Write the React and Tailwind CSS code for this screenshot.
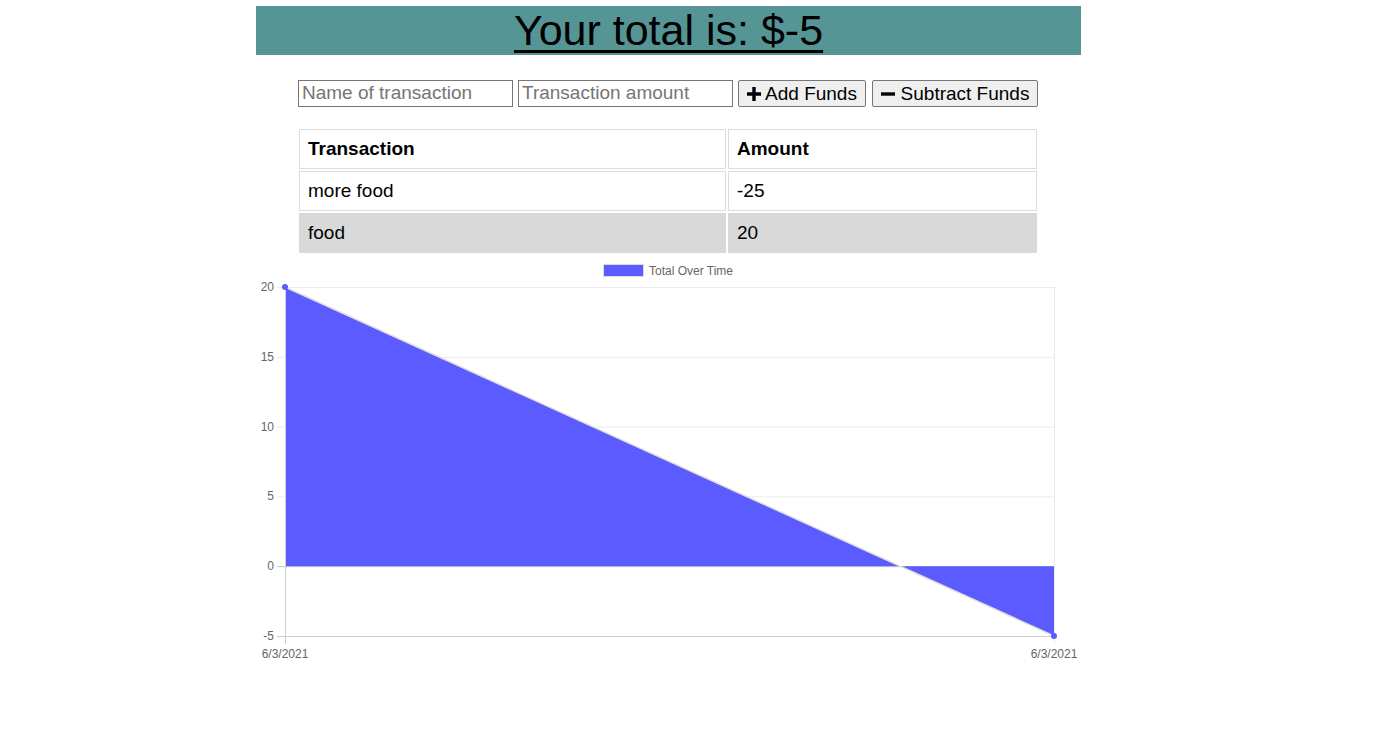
import React from 'react';

const PlusIcon = () => (
    <svg width="14" height="14" viewBox="0 0 14 14" className="inline-block">
        <path d="M5.3 0h3.4v5.3H14v3.4H8.7V14H5.3V8.7H0V5.3h5.3z" fill="#000" />
    </svg>
);

const MinusIcon = () => (
    <svg width="14" height="14" viewBox="0 0 14 14" className="inline-block">
        <rect x="0" y="5.3" width="14" height="3.4" fill="#000" />
    </svg>
);

const Chart = () => {
    const left = 29;
    const right = 798;
    const top = 29;
    const bottom = 378;
    const step = (bottom - top) / 5;
    const ticks = [20, 15, 10, 5, 0, -5];
    const zeroY = top + step * 4;
    const crossX = left + (right - left) * 0.8;

    return (
        <svg width="825" height="415" className="block" style={{ fontFamily: 'Liberation Sans, Arial, sans-serif' }}>
            {/* legend */}
            <rect x="347.5" y="6.5" width="40" height="12" fill="#5b5bff" stroke="#dcdcdc" />
            <text x="393" y="17" fontSize="12" fill="#666">Total Over Time</text>

            {/* grid */}
            {ticks.map((t, i) => {
                const y = top + step * i;
                const isZero = t === 0;
                const isBottom = i === ticks.length - 1;
                return (
                    <g key={t}>
                        <line x1={left - 8} x2={right} y1={y + 0.5} y2={y + 0.5}
                            stroke={isBottom ? '#cfcfcf' : isZero ? '#c8c8c8' : '#ececec'} strokeWidth="1" />
                        <text x="18" y={y + 4} fontSize="12" fill="#666" textAnchor="end">{t}</text>
                    </g>
                );
            })}
            <line x1={right + 0.5} x2={right + 0.5} y1={top} y2={bottom + 8} stroke="#ececec" />

            {/* fill */}
            <polygon points={`${left},${zeroY} ${left},${top} ${crossX},${zeroY}`} fill="#5b5bff" />
            <polygon points={`${crossX},${zeroY} ${right},${bottom} ${right},${zeroY}`} fill="#5b5bff" />
            <line x1={left} y1={top} x2={right} y2={bottom} stroke="#e2e2e2" strokeWidth="1.5" />

            {/* axes */}
            <line x1={left + 0.5} x2={left + 0.5} y1={top} y2={bottom + 8} stroke="#cfcfcf" />

            <circle cx={left} cy={top} r="3" fill="#5b5bff" />
            <circle cx={right} cy={bottom} r="3" fill="#5b5bff" />

            <text x={left} y="400" fontSize="12" fill="#666" textAnchor="middle">6/3/2021</text>
            <text x={right} y="400" fontSize="12" fill="#666" textAnchor="middle">6/3/2021</text>
        </svg>
    );
};

const App = () => {
    const rows = [
        { name: 'more food', value: '-25' },
        { name: 'food', value: '20' },
    ];

    return (
        <div className="min-h-screen bg-white text-black" style={{ fontFamily: '"Liberation Sans", Arial, sans-serif' }}>
            <div className="ml-[256px] w-[825px] pt-[6px]">
                {/* Header */}
                <div className="bg-[#559596] h-[49px] flex justify-center items-start">
                    <h1 className="text-[43px] leading-[49px] underline decoration-[3px] underline-offset-[5px]">
                        Your total is: $-5
                    </h1>
                </div>

                {/* Form */}
                <div className="mt-[25px] ml-[42px] flex items-center gap-[5px] text-[19px]">
                    <input
                        type="text"
                        placeholder="Name of transaction"
                        className="w-[215px] h-[27px] border border-[#767676] px-[3px] placeholder:text-[#757575] outline-none"
                    />
                    <input
                        type="text"
                        placeholder="Transaction amount"
                        className="w-[215px] h-[27px] border border-[#767676] px-[3px] placeholder:text-[#757575] outline-none"
                    />
                    <button className="h-[27px] w-[128px] border border-[#767676] rounded-[2px] bg-[#efefef] flex items-center justify-center gap-[4px] leading-none">
                        <PlusIcon />
                        Add Funds
                    </button>
                    <button className="ml-[1px] h-[27px] w-[166px] border border-[#767676] rounded-[2px] bg-[#efefef] flex items-center justify-center gap-[6px] leading-none">
                        <MinusIcon />
                        Subtract Funds
                    </button>
                </div>

                {/* Table */}
                <table className="mt-[20px] ml-[41px] w-[742px] border-separate border-spacing-[2px] text-[19px]">
                    <thead>
                        <tr>
                            <th className="w-[427px] text-left font-bold border border-[#dddddd] px-[8px] h-[40px]">Transaction</th>
                            <th className="text-left font-bold border border-[#dddddd] px-[8px] h-[40px]">Amount</th>
                        </tr>
                    </thead>
                    <tbody>
                        {rows.map((r, i) => (
                            <tr key={r.name} className={i % 2 === 1 ? 'bg-[#d9d9d9]' : ''}>
                                <td className={`border px-[8px] h-[40px] ${i % 2 === 1 ? 'border-[#d9d9d9]' : 'border-[#dddddd]'}`}>{r.name}</td>
                                <td className={`border px-[8px] h-[40px] ${i % 2 === 1 ? 'border-[#d9d9d9]' : 'border-[#dddddd]'}`}>{r.value}</td>
                            </tr>
                        ))}
                    </tbody>
                </table>

                {/* Chart */}
                <div className="mt-[3px]">
                    <Chart />
                </div>
            </div>
        </div>
    );
};

export default App;
